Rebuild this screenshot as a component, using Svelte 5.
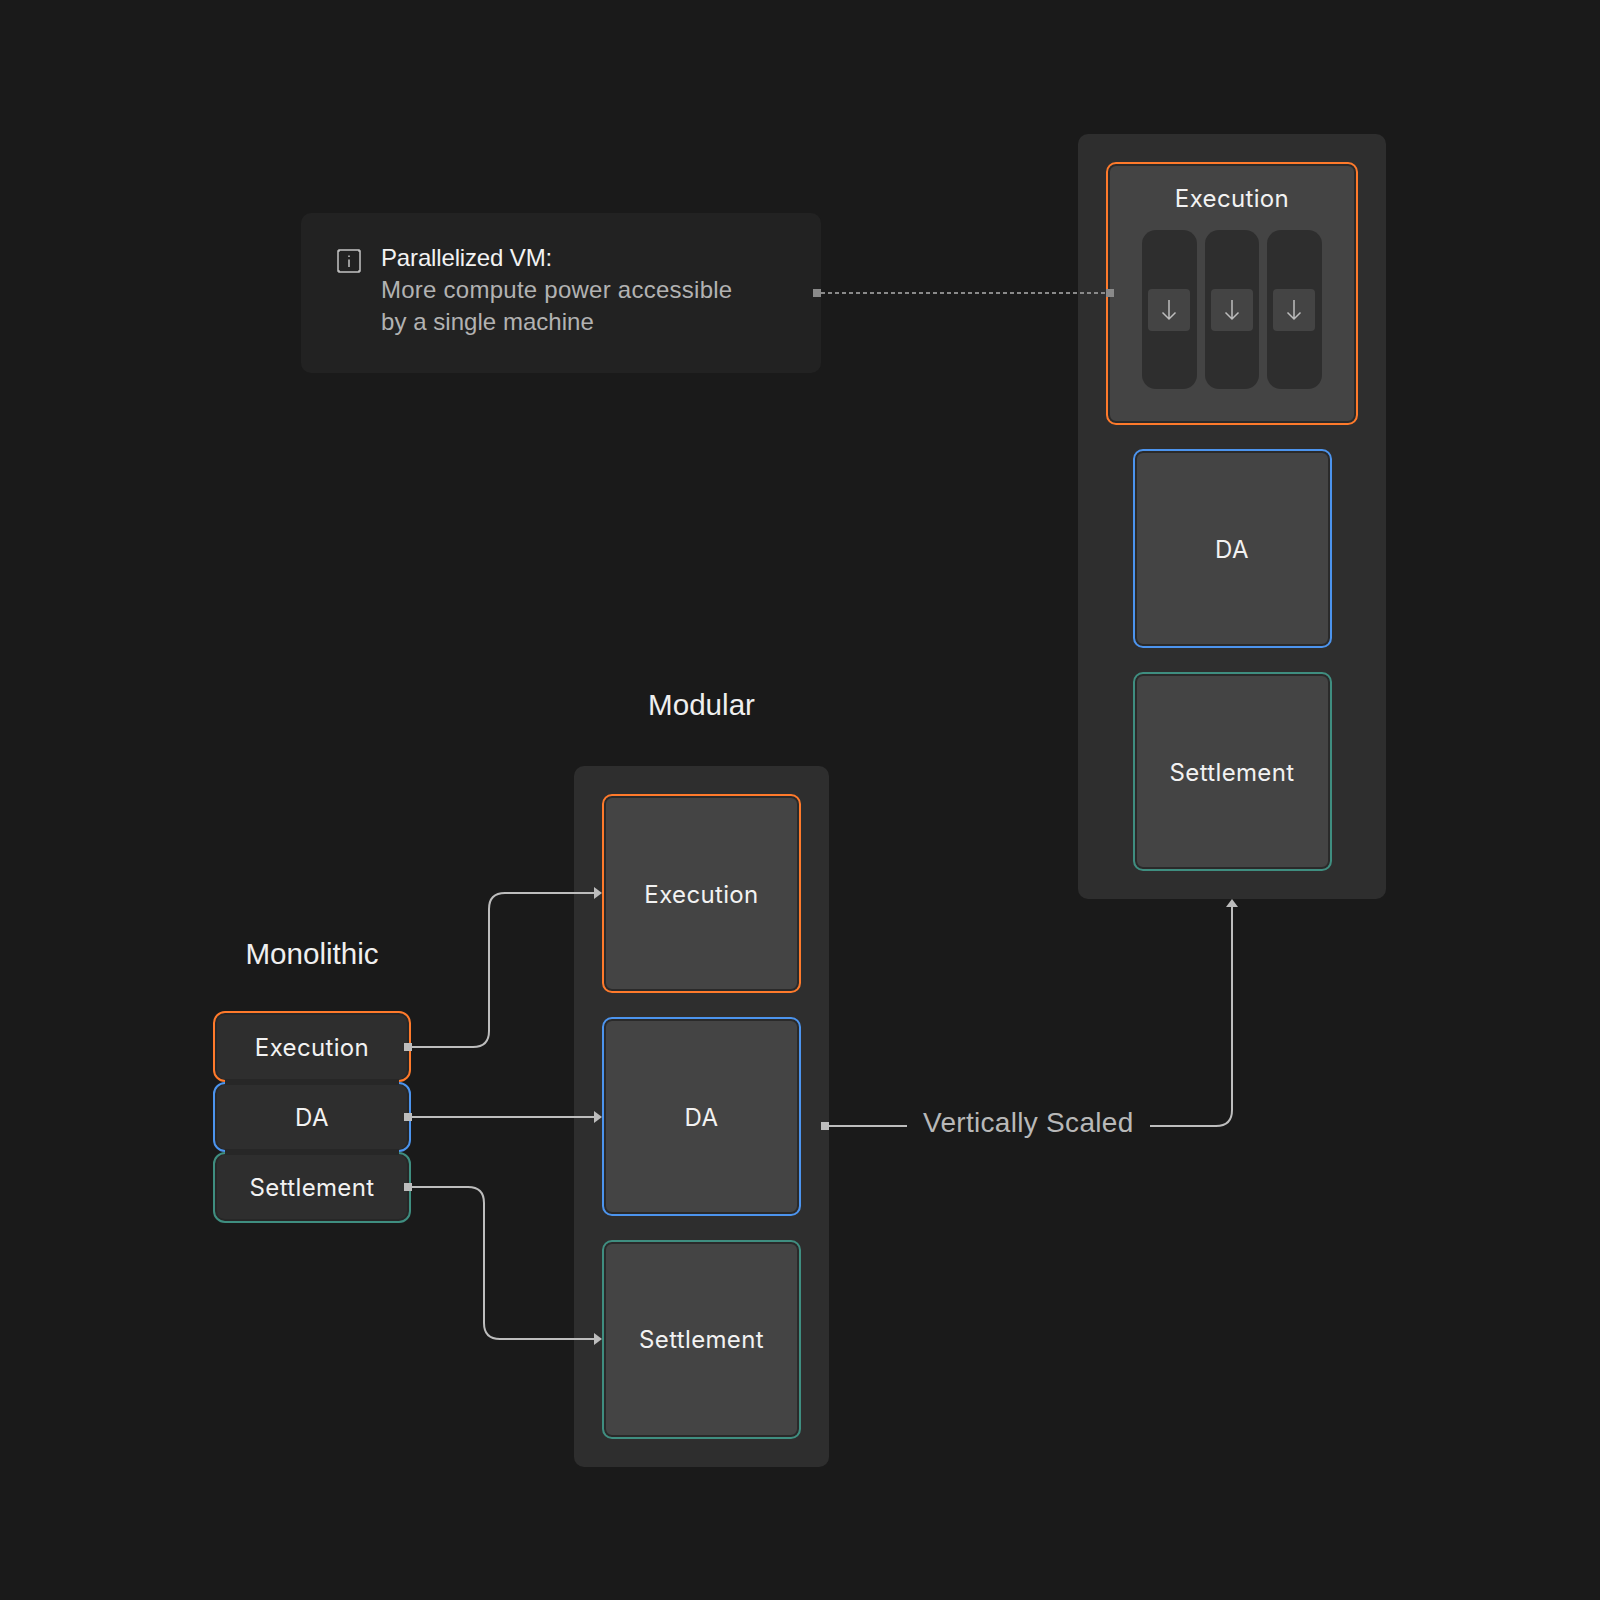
<script>
  const monoBlocks = [
    { label: 'Execution', tone: 'orange', cut: 'cut-bottom' },
    { label: 'DA', tone: 'blue', cut: 'cut-both' },
    { label: 'Settlement', tone: 'teal', cut: 'cut-top' }
  ];
  const modular = [
    { label: 'Execution', tone: 'orange' },
    { label: 'DA', tone: 'blue' },
    { label: 'Settlement', tone: 'teal' }
  ];
</script>

<div class="canvas">
  <svg class="wires" width="1600" height="1600" viewBox="0 0 1600 1600" fill="none" aria-hidden="true">
    <g stroke="#bdbdbd" stroke-width="2">
      <path d="M411 1047H473Q489 1047 489 1031V909Q489 893 505 893H596" />
      <path d="M411 1117H596" />
      <path d="M411 1187H468Q484 1187 484 1203V1323Q484 1339 500 1339H596" />
      <path d="M829 1126H907" />
      <path d="M1150 1126H1216Q1232 1126 1232 1110V906" />
    </g>
    <g fill="#bdbdbd">
      <path d="M594 887L602 893L594 899Z" />
      <path d="M594 1111L602 1117L594 1123Z" />
      <path d="M594 1333L602 1339L594 1345Z" />
      <path d="M1226 907L1232 899L1238 907Z" />
      <rect x="404" y="1043" width="8" height="8" />
      <rect x="404" y="1113" width="8" height="8" />
      <rect x="404" y="1183" width="8" height="8" />
      <rect x="821" y="1122" width="8" height="8" />
    </g>
    <path d="M821 293H1107" stroke="#8a8a8a" stroke-width="2" stroke-dasharray="4 3" />
    <rect x="813" y="289" width="8" height="8" fill="#8a8a8a" />
    <rect x="1106" y="289" width="8" height="8" fill="#8a8a8a" />
  </svg>

  <div class="info">
    <svg class="info-icon" width="24" height="24" viewBox="0 0 24 24" fill="none" aria-hidden="true">
      <path d="M2 1H22V2H23V22H22V23H2V22H1V2H2Z" stroke="#c4c4c4" stroke-width="1.5" />
      <path d="M12 10.5V18M12 6.5V8" stroke="#c4c4c4" stroke-width="1.5" />
    </svg>
    <p class="info-text">
      <span class="info-head">Parallelized VM:</span>
      <span class="info-line">More compute power accessible</span>
      <span class="info-line tight">by a single machine</span>
    </p>
  </div>

  <section class="mono">
    <h2 class="title">Monolithic</h2>
    <div class="mono-stack">
      {#each monoBlocks as b}
        <div class="mono-block {b.tone} {b.cut}">{b.label}</div>
      {/each}
    </div>
  </section>

  <section class="modular">
    <h2 class="title modular-title">Modular</h2>
    <div class="panel modular-panel">
      {#each modular as b}
        <div class="box {b.tone}">{b.label}</div>
      {/each}
    </div>
  </section>

  <span class="scaled">Vertically Scaled</span>

  <div class="panel scaled-panel">
    <div class="box orange exec">
      <span class="exec-title">Execution</span>
      <div class="lanes">
        {#each [0, 1, 2] as lane (lane)}
          <div class="lane">
            <div class="tile">
              <svg width="18" height="24" viewBox="0 0 18 24" fill="none" aria-hidden="true">
                <path d="M9 2V21M2.5 14.5L9 21L15.5 14.5" stroke="#bdbdbd" stroke-width="1.5" />
              </svg>
            </div>
          </div>
        {/each}
      </div>
    </div>
    <div class="box blue">DA</div>
    <div class="box teal">Settlement</div>
  </div>
</div>

<style>
  :global(body) {
    background: #1a1a1a;
  }
  .canvas {
    position: relative;
    width: 1600px;
    height: 1600px;
    overflow: hidden;
    background: #1a1a1a;
    color: #f2f2f2;
    font-family: Inter, "Liberation Sans", sans-serif;
  }
  .wires {
    position: absolute;
    left: 0;
    top: 0;
    z-index: 2;
  }

  .info {
    position: absolute;
    left: 301px;
    top: 213px;
    width: 520px;
    height: 160px;
    box-sizing: border-box;
    padding: 29px 36px;
    display: flex;
    gap: 20px;
    background: #222222;
    border-radius: 10px;
  }
  .info-icon {
    flex: none;
    margin-top: 7px;
  }
  .info-text {
    margin: 0;
    font-family: "Liberation Sans", sans-serif;
    font-size: 24px;
    line-height: 32px;
    letter-spacing: 0.25px;
    color: #b2b2b2;
  }
  .info-head {
    display: block;
    color: #f2f2f2;
    letter-spacing: -0.15px;
  }
  .info-line {
    display: block;
  }
  .tight {
    letter-spacing: 0.04px;
  }

  .title {
    margin: 0;
    font-weight: 400;
    font-size: 29.6px;
    line-height: 34px;
    text-align: center;
    color: #efefef;
    font-family: "Liberation Sans", sans-serif;
  }

  .mono {
    position: absolute;
    left: 213px;
    top: 937px;
    width: 198px;
  }
  .mono-stack {
    display: flex;
    flex-direction: column;
    margin-top: 40px;
  }
  .mono-block {
    position: relative;
    height: 70.67px;
    box-sizing: border-box;
    border-width: 2px;
    border-style: solid;
    border-radius: 12px;
    background: #2e2e2e;
    box-shadow: inset 2px 0 0 #272727, inset -2px 0 0 #272727;
    display: flex;
    align-items: center;
    justify-content: center;
    font-size: 24px;
    letter-spacing: 0.35px;
    padding-top: 1px;
  }
  .cut-bottom {
    padding-top: 2px;
    box-shadow: inset 2px 0 0 #272727, inset -2px 0 0 #272727, inset 0 2px 0 #272727;
  }
  .cut-top {
    padding-top: 0;
    box-shadow: inset 2px 0 0 #272727, inset -2px 0 0 #272727, inset 0 -2px 0 #272727;
  }
  .cut-bottom::after,
  .cut-both::after,
  .cut-top::before,
  .cut-both::before {
    content: "";
    position: absolute;
    left: 10px;
    right: 10px;
    height: 3px;
    background: #272727;
  }
  .cut-bottom::after,
  .cut-both::after {
    bottom: -2px;
  }
  .cut-top::before,
  .cut-both::before {
    top: -2px;
  }

  .modular {
    position: absolute;
    left: 574px;
    top: 688px;
    width: 255px;
  }
  .modular-title {
    margin-bottom: 44px;
  }
  .panel {
    box-sizing: border-box;
    display: flex;
    flex-direction: column;
    align-items: center;
    background: #2e2e2e;
    border-radius: 10px;
  }
  .modular-panel {
    height: 701px;
    padding: 28px 0;
    gap: 24px;
  }
  .box {
    width: 199px;
    height: 199px;
    flex: none;
    box-sizing: border-box;
    border-width: 2px;
    border-style: solid;
    border-radius: 10px;
    background: #444444;
    box-shadow: inset 0 0 0 2px #2a2a2a;
    display: flex;
    align-items: center;
    justify-content: center;
    font-size: 24px;
    letter-spacing: 0.35px;
    padding-top: 1px;
  }
  .modular-panel .orange {
    padding-top: 2px;
  }
  .modular-panel .teal {
    padding-top: 0;
  }
  .orange { border-color: #ff7a2b; }
  .blue { border-color: #4c94ee; }
  .teal { border-color: #3f8e80; }

  .scaled {
    position: absolute;
    left: 923px;
    top: 1106px;
    font-family: "Liberation Sans", sans-serif;
    font-size: 28px;
    line-height: 34px;
    letter-spacing: 0.3px;
    color: #b8b8b8;
  }

  .scaled-panel {
    position: absolute;
    left: 1078px;
    top: 134px;
    width: 308px;
    height: 765px;
    padding: 28px 0;
    gap: 24px;
  }
  .exec {
    width: 252px;
    height: 263px;
    flex-direction: column;
    justify-content: flex-start;
    padding-top: 20px;
  }
  .exec-title {
    line-height: 29px;
  }
  .lanes {
    display: flex;
    gap: 8px;
    margin: 17px 0 0 -0.5px;
  }
  .lane {
    width: 54.5px;
    height: 159px;
    box-sizing: border-box;
    padding-top: 1px;
    border-radius: 14px;
    background: #2e2e2e;
    display: flex;
    align-items: center;
    justify-content: center;
  }
  .tile {
    width: 42px;
    height: 42px;
    border-radius: 4px;
    background: #444444;
    display: flex;
    align-items: center;
    justify-content: center;
  }
</style>
